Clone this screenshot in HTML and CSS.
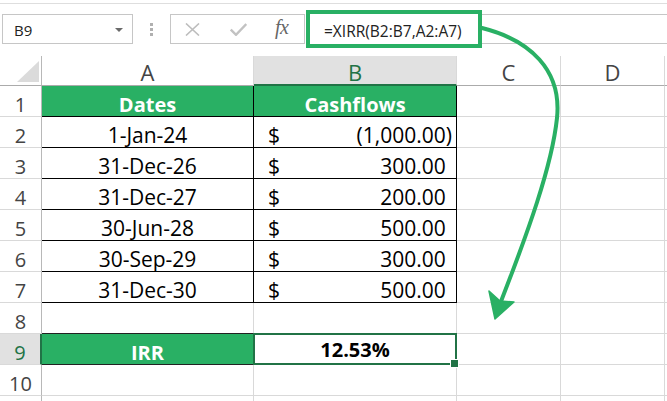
FILE: index.html
```html
<!DOCTYPE html>
<html>
<head>
<meta charset="utf-8">
<link rel="stylesheet" href="styles.css">
</head>
<body>
<div class="toolbar">
  <div class="namebox"><span>B9</span><span class="caret"></span></div>
  <div class="grip"><i></i><i></i><i></i></div>
  <div class="btns">
    <svg class="ico-x" width="15" height="13" viewBox="0 0 15 13"><path d="M1 0.5 L14 12.5 M14 0.5 L1 12.5" stroke="#bdbdbd" stroke-width="1.6" fill="none"/></svg>
    <svg class="ico-ok" width="17" height="13" viewBox="0 0 17 13"><path d="M0.8 6.5 L6 11.8 L16.3 1" stroke="#c2c2c2" stroke-width="2.4" fill="none"/></svg>
    <span class="fx">fx</span>
  </div>
  <div class="formula"><div class="hl">=XIRR(B2:B7,A2:A7)</div></div>
</div>

<div class="sheet">
  <div class="corner"></div><div class="ch">A</div><div class="ch sel">B</div><div class="ch">C</div><div class="ch">D</div><div class="e hdr"></div>

  <div class="rh">1</div><div class="g bd">Dates</div><div class="g bd">Cashflows</div><div></div><div></div><div class="e"></div>
  <div class="rh">2</div><div class="bd">1-Jan-24</div><div class="bd m"><span>$</span><span>(1,000.00)</span></div><div></div><div></div><div class="e"></div>
  <div class="rh">3</div><div class="bd">31-Dec-26</div><div class="bd m"><span>$</span><span>300.00<span class="p">)</span></span></div><div></div><div></div><div class="e"></div>
  <div class="rh">4</div><div class="bd">31-Dec-27</div><div class="bd m"><span>$</span><span>200.00<span class="p">)</span></span></div><div></div><div></div><div class="e"></div>
  <div class="rh">5</div><div class="bd">30-Jun-28</div><div class="bd m"><span>$</span><span>500.00<span class="p">)</span></span></div><div></div><div></div><div class="e"></div>
  <div class="rh">6</div><div class="bd">30-Sep-29</div><div class="bd m"><span>$</span><span>300.00<span class="p">)</span></span></div><div></div><div></div><div class="e"></div>
  <div class="rh">7</div><div class="bd">31-Dec-30</div><div class="bd m"><span>$</span><span>500.00<span class="p">)</span></span></div><div></div><div></div><div class="e"></div>
  <div class="rh">8</div><div class="bb"></div><div class="bb"></div><div></div><div></div><div class="e"></div>
  <div class="rh rsel">9</div><div class="g bb">IRR</div><div class="b9">12.53%</div><div></div><div></div><div class="e"></div>
  <div class="rh">10</div><div></div><div></div><div></div><div></div><div class="e"></div>
  <div class="rh"></div><div></div><div></div><div></div><div></div><div class="e"></div>
</div>

<svg class="arrow" width="667" height="401" viewBox="0 0 667 401">
  <path d="M482 28 C530 40 562 70 557 118 C552 166 528 232 500 304" stroke="#29b064" stroke-width="4" fill="none" stroke-linecap="round"/>
  <path d="M495 319 L489 291 L500 301 L514 302 Z" fill="#29b064" stroke="#29b064" stroke-width="1.5" stroke-linejoin="round"/>
</svg>
</body>
</html>
```

FILE: styles.css
```css
* { box-sizing: border-box; }
html, body { margin: 0; padding: 0; background: #fff; }
body {
  font-family: "Open Sans", "DejaVu Sans", sans-serif;
  width: 667px;
  height: 401px;
  overflow: hidden;
  position: relative;
  color: #000;
}

/* ---------- formula bar ---------- */
.toolbar {
  margin-top: 3px;
  border-top: 1px solid #dedede;
  height: 53px;
  display: flex;
  align-items: flex-start;
  padding-top: 10px;
}
.namebox {
  margin-left: 2px;
  width: 131px;
  height: 30px;
  border: 1px solid #c6c6c6;
  display: flex;
  align-items: center;
  justify-content: space-between;
  padding: 1px 9px 0 11px;
  font-size: 15px;
  color: #222;
}
.caret {
  width: 0;
  height: 0;
  border-left: 4px solid transparent;
  border-right: 4px solid transparent;
  border-top: 4px solid #6a6a6a;
}
.grip {
  display: flex;
  flex-direction: column;
  gap: 2px;
  margin: 9px 17px 0 17px;
}
.grip i { display: block; width: 3px; height: 3px; background: #b0b0b0; }
.btns {
  width: 135px;
  height: 30px;
  border: 1px solid #c6c6c6;
  display: flex;
  align-items: center;
  padding-left: 14px;
}
.ico-x { margin-right: 30px; }
.ico-ok { margin-right: 28px; }
.fx {
  font-family: "Liberation Serif", "DejaVu Serif", serif;
  font-style: italic;
  font-size: 20px;
  color: #666;
  margin-top: -3px;
  letter-spacing: -0.5px;
}
.formula {
  flex: 1;
  height: 30px;
  margin-left: 1px;
  border: 1px solid #c6c6c6;
  border-right: none;
}
.hl {
  margin: -5px 0 0 -1px;
  width: 176px;
  height: 38px;
  border: 4px solid #29b064;
  padding: 3px 0 0 14px;
  font-size: 15.5px;
  line-height: 28px;
  color: #222;
  background: #fff;
  white-space: nowrap;
}

/* ---------- sheet grid ---------- */
.sheet {
  display: grid;
  grid-template-columns: 42px 212px 203px 104px 104px 2px;
  grid-template-rows: 30px repeat(10, 31px) 10px;
  font-size: 21px;
}
.sheet > div {
  border-right: 1px solid #d9d9d9;
  border-bottom: 1px solid #d9d9d9;
  display: flex;
  align-items: flex-end;
  justify-content: center;
  line-height: 1;
  padding-bottom: 1px;
  white-space: nowrap;
}
.sheet > .corner {
  position: relative;
  border-right-color: #b8b8b8;
  border-bottom-color: #ababab;
}
.corner::after {
  content: "";
  position: absolute;
  right: 2px;
  bottom: 3px;
  width: 22px;
  height: 21px;
  background: #dbdbdb;
  clip-path: polygon(100% 0, 100% 100%, 0 100%);
}
.sheet > .ch {
  border-bottom-color: #ababab;
  color: #444;
  font-size: 22px;
  padding-bottom: 2px;
}
.sheet > .hdr { border-bottom-color: #ababab; }
.sheet > .ch.sel {
  background: #e1e1e1;
  color: #217346;
  border-bottom: 2px solid #217346;
  padding-bottom: 1px;
}
.sheet > .rh {
  border-right-color: #b8b8b8;
  color: #444;
  font-size: 20px;
}
.sheet > .rh.rsel {
  background: #e1e1e1;
  color: #217346;
  border-right: 2px solid #217346;
}
.sheet > .e { border-right: none; }

.sheet > .g {
  background: #29b064;
  color: #fff;
  font-weight: 700;
  font-size: 20px;
}
.sheet > .bd {
  border-right-color: #000;
  border-bottom-color: #000;
}
.sheet > .bb { border-bottom-color: #222; }
.sheet > .m {
  justify-content: space-between;
  padding-left: 14px;
  padding-right: 4px;
}
.p { visibility: hidden; }

.sheet > .b9 {
  position: relative;
  z-index: 1;
  font-weight: 700;
  font-size: 20px;
  padding-bottom: 4px;
}
.b9::before {
  content: "";
  position: absolute;
  left: -1px;
  top: -1px;
  right: -1px;
  bottom: -1px;
  border: 2px solid #217346;
}
.b9::after {
  content: "";
  position: absolute;
  right: -3px;
  bottom: -4px;
  width: 7px;
  height: 7px;
  background: #217346;
  border: 1px solid #fff;
}

.arrow {
  position: absolute;
  left: 0;
  top: 0;
  pointer-events: none;
}
```
